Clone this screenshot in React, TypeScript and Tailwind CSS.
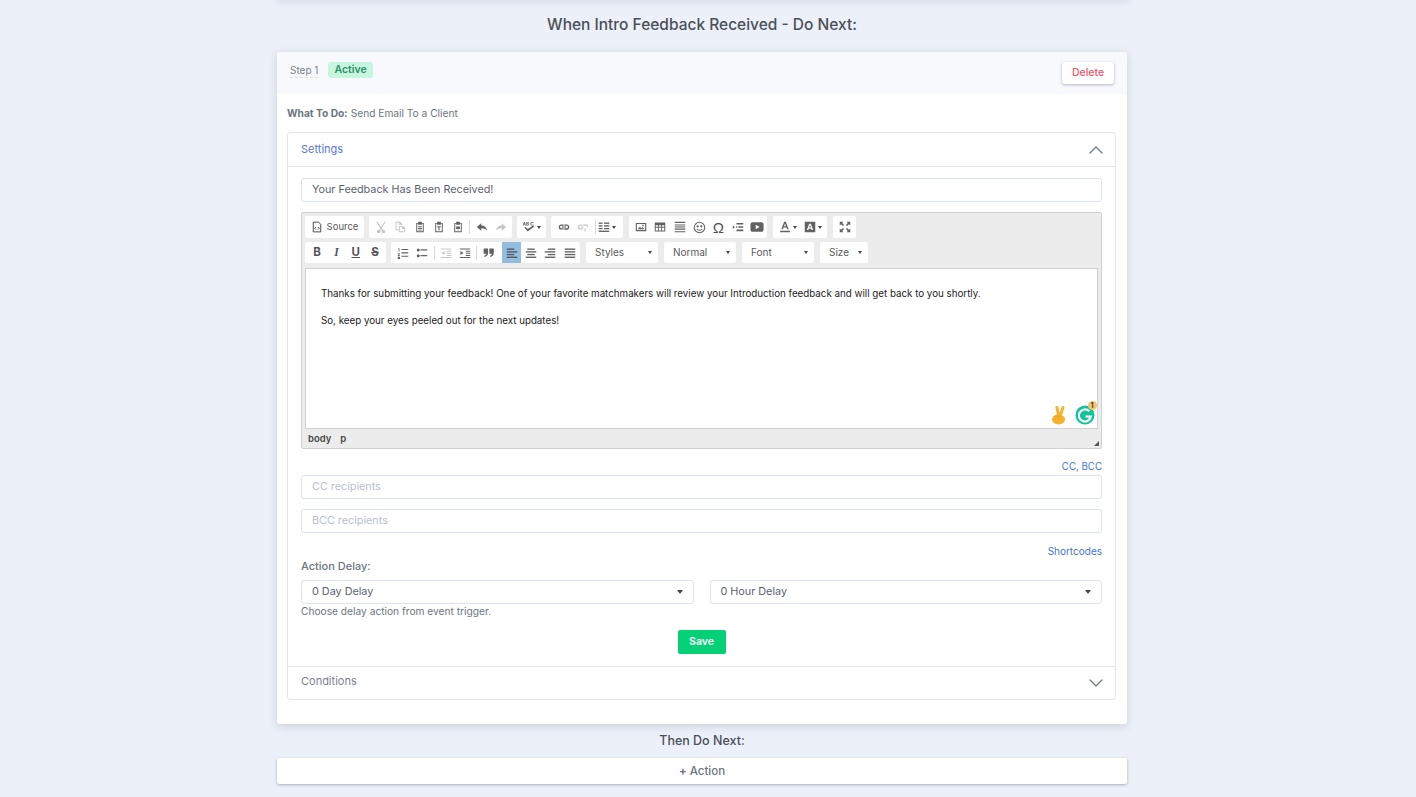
import type { ReactNode } from 'react';
import { ChevronDown, ChevronUp } from 'lucide-react';

const FONT = "font-['Inter','Noto_Sans',sans-serif]";

function Icon({ children, off = false }: { children: ReactNode; off?: boolean }) {
  return (
    <svg
      viewBox="0 0 16 16"
      className={off ? 'h-[12px] w-[12px] opacity-30' : 'h-[12px] w-[12px] opacity-85'}
      fill="#474747"
      stroke="none"
    >
      {children}
    </svg>
  );
}

function Tool({ children, active = false }: { children: ReactNode; active?: boolean }) {
  return (
    <div
      className={
        active
          ? 'flex h-full w-[19.3px] items-center justify-center bg-[#92bce0]'
          : 'flex h-full w-[19.3px] items-center justify-center'
      }
    >
      {children}
    </div>
  );
}

function Sep() {
  return <div className="mx-[1.5px] h-[14px] w-px shrink-0 bg-[#d8d8d8]" />;
}

function Group({ children, className = '' }: { children: ReactNode; className?: string }) {
  return <div className={`flex h-full items-center rounded-[2px] bg-white ${className}`}>{children}</div>;
}

function Arrow() {
  return <span className="ml-[2px] h-0 w-0 border-x-[2.5px] border-t-[3px] border-x-transparent border-t-[#474747]" />;
}

function Combo({ label, w }: { label: string; w: string }) {
  return (
    <div className={`ml-[1px] flex h-full items-center justify-between rounded-[2px] bg-white pl-[9px] pr-[6px] ${w}`}>
      <span className="text-[10px] text-[#5a5a5a]">{label}</span>
      <span className="h-0 w-0 border-x-[2.5px] border-t-[3px] border-x-transparent border-t-[#474747]" />
    </div>
  );
}

function Lines({ rows }: { rows: [number, number][] }) {
  return (
    <>
      {rows.map(([x, w], i) => (
        <rect key={i} x={x} y={2 + i * 3.6} width={w} height="1.8" />
      ))}
    </>
  );
}

function Toolbar() {
  return (
    <div className="flex flex-col gap-[4px] px-[3px] pt-[3px]">
      <div className="flex h-[22px] gap-[5px]">
        <Group className="w-[59px] justify-center gap-[4px]">
          <svg viewBox="0 0 16 16" className="h-[12px] w-[12px]" fill="none" stroke="#474747" strokeWidth="1.3">
            <path d="M3 1.5h7l3 3v10H3z" />
            <path d="M6.5 8 5 9.7l1.5 1.7M9.5 8 11 9.7l-1.5 1.7" />
          </svg>
          <span className="text-[9.5px] text-[#5a5a5a]">Source</span>
        </Group>
        <Group className="w-[143px] pl-[2.5px]">
          <Tool>
            <Icon off>
              <path d="M3 1l5 7 5-7h1.5L9 9.5l1.5 2.2a2.3 2.3 0 1 1-1.3 1L8 11l-1.2 1.7a2.3 2.3 0 1 1-1.3-1L7 9.5 1.5 1z" />
            </Icon>
          </Tool>
          <Tool>
            <Icon off>
              <path d="M2 1h6l3 3v2h-1.2V5H7V2.200H3.200V11H6v1.200H2zM6.500 6.500h5.500l3 3V15H6.500zM7.700 7.700v6.100h6.100V10.500h-3V7.700z" />
            </Icon>
          </Tool>
          <Tool>
            <Icon>
              <path d="M5.500 1h5v1.500H13V15H3V2.500h2.500zM4.300 3.800v10h7.400v-10h-1.200V5h-5V3.800zM5.500 7h5v1.200h-5zM5.500 9.300h5v1.200h-5zM5.500 11.600h5v1.200h-5z" />
            </Icon>
          </Tool>
          <Tool>
            <Icon>
              <path d="M5.500 1h5v1.500H13V15H3V2.500h2.500zM4.300 3.800v10h7.400v-10h-1.200V5h-5V3.800zM5.500 7h5v1.400H8.700V12.500H7.300V8.400H5.500z" />
            </Icon>
          </Tool>
          <Tool>
            <Icon>
              <path d="M5.500 1h5v1.500H13V15H3V2.500h2.500zM4.300 3.800v10h7.400v-10h-1.200V5h-5V3.800zM5.500 7.200h5v3.500h-5zM7 11.500h2l-1 1.500z" />
            </Icon>
          </Tool>
          <Sep />
          <Tool>
            <Icon>
              <path d="M7 3v3c4 0 7 2 8 7-1.800-2.500-4.200-3.400-8-3.400V13L1 8z" />
            </Icon>
          </Tool>
          <Tool>
            <Icon off>
              <path d="M9 3v3c-4 0-7 2-8 7 1.800-2.500 4.200-3.400 8-3.400V13l6-5z" />
            </Icon>
          </Tool>
        </Group>
        <Group className="w-[29px] justify-center">
          <Icon>
            <path d="M1 1.200h1.500L4 6H3l-.3-1H1.300L1 6H0zM1.600 4.200h.8L2 2.700zM4.500 1.200H7l.6.700v1l-.5.500.6.500v1.300l-.7.800H4.500zM5.500 2.100v.9h1V2.100zM5.500 3.900V5h1.200V3.900zM11 1.200h3v1h-3v2.800h3v1h-3l-1-1V2.200z" />
            <path d="M2 9l1.300-1.300 3 3L13.500 6 15 7.400 6.300 14z" />
          </Icon>
          <Arrow />
        </Group>
        <Group className="w-[72px] pl-[3.500px]">
          <Tool>
            <Icon>
              <path d="M1 8a3.500 3.500 0 0 1 3.500-3.500h3v1.700h-3a1.800 1.800 0 0 0 0 3.600h3v1.700h-3A3.500 3.500 0 0 1 1 8zm14 0a3.500 3.500 0 0 1-3.500 3.500h-3V9.800h3a1.800 1.800 0 0 0 0-3.600h-3V4.500h3A3.500 3.500 0 0 1 15 8zM5 7.200h6v1.600H5z" />
            </Icon>
          </Tool>
          <Tool>
            <Icon off>
              <path d="M1 8a3.500 3.500 0 0 1 3.500-3.500h3v1.700h-3a1.800 1.800 0 0 0 0 3.600h3v1.700h-3A3.500 3.500 0 0 1 1 8zm14-.5V8h-1.700a1.800 1.800 0 0 0-1.800-1.800h-3V4.500h3A3.500 3.500 0 0 1 15 7.500zM10 10h1.500v4H10zM5 7.200h4v1.600H5z" />
            </Icon>
          </Tool>
          <Sep />
          <Tool>
            <div className="flex items-center">
              <svg viewBox="0 0 16 16" className="h-[12px] w-[12px] opacity-85" fill="#474747">
                <Lines rows={[[1, 5], [1, 5], [1, 5], [1, 14]]} />
                <rect x="8" y="2" width="7" height="1.800" />
                <rect x="8" y="5.600" width="7" height="1.800" />
                <rect x="8" y="9.200" width="7" height="1.800" />
              </svg>
              <Arrow />
            </div>
          </Tool>
        </Group>
        <Group className="ml-[1px] w-[138px] pl-[2.500px]">
          <Tool>
            <Icon>
              <path d="M1 2.500h14v11H1zM2.500 4v8h11V4zM3.500 11l3-3.500 2 2 1.500-1.500 2.500 3zM9.500 5h2v2h-2z" />
            </Icon>
          </Tool>
          <Tool>
            <Icon>
              <path d="M1 2h14v12H1zM2.300 5.500v2.200h3V5.500zm4.200 0v2.200h3V5.500zm4.200 0v2.200h3V5.500zM2.300 8.900v3.800h3V8.900zm4.200 0v3.800h3V8.900zm4.200 0v3.800h3V8.900z" />
            </Icon>
          </Tool>
          <Tool>
            <Icon>
              <path d="M1 1h14v1.500H1zM1 4.500h14V6H1zM1 7.300h14v1.400H1zM1 10h14v1.500H1zM1 13.500h14V15H1z" />
            </Icon>
          </Tool>
          <Tool>
            <svg viewBox="0 0 16 16" className="h-[13px] w-[13px] opacity-85" fill="none" stroke="#474747" strokeWidth="1.300">
              <circle cx="8" cy="8" r="6.500" />
              <circle cx="5.700" cy="6.500" r=".7" fill="#474747" />
              <circle cx="10.300" cy="6.500" r=".7" fill="#474747" />
              <path d="M4.800 9.800c1.500 2 4.900 2 6.400 0" />
            </svg>
          </Tool>
          <Tool>
            <span className="font-['Liberation_Sans',sans-serif] text-[15px] leading-none text-[#505050]">Ω</span>
          </Tool>
          <Tool>
            <Icon>
              <path d="M1 6l3 2.200L1 10.300zM6 2.500h9v2.300H6zM5.500 7h1.500v2H5.500zM8.500 7H15v2H8.500zM6 11.200h9v2.300H6z" />
            </Icon>
          </Tool>
          <Tool>
            <svg viewBox="0 0 16 16" className="h-[14px] w-[14px] opacity-85" fill="#474747">
              <path d="M3 2.500h10A2.500 2.500 0 0 1 15.500 5v6a2.500 2.500 0 0 1-2.500 2.500H3A2.500 2.500 0 0 1 .5 11V5A2.500 2.500 0 0 1 3 2.500zM6.500 5.500v5L11 8z" />
            </svg>
          </Tool>
        </Group>
        <Group className="ml-[1px] w-[54px] justify-center gap-[7px]">
          <div className="flex items-center">
            <Icon>
              <path d="M6.800 1h2.400l3.600 10h-2L10 8.700H6L5.200 11h-2zM6.600 7h2.800L8 3.200zM1.500 13h13v2h-13z" />
            </Icon>
            <Arrow />
          </div>
          <div className="flex items-center">
            <Icon>
              <path d="M1 1h14v14H1zM6.900 3.500 3.800 12h1.900l.6-1.800h3.400l.6 1.800h1.900L9.100 3.500zM6.800 8.800 8 5.400l1.200 3.400z" fillRule="evenodd" />
            </Icon>
            <Arrow />
          </div>
        </Group>
        <Group className="ml-[1px] w-[23px] justify-center">
          <Icon>
            <path d="M1 1h5L4.300 2.700 6.800 5.200 5.200 6.800 2.700 4.300 1 6zM15 1v5l-1.700-1.700-2.500 2.500-1.600-1.600 2.500-2.500L10 1zM1 15v-5l1.700 1.700 2.500-2.500 1.600 1.600-2.500 2.500L6 15zM15 15h-5l1.700-1.700-2.500-2.500 1.600-1.600 2.500 2.500L15 10z" />
          </Icon>
        </Group>
      </div>
      <div className="flex h-[21px] gap-[5px]">
        <Group className="w-[81px] pl-[2.500px] text-[11.5px] text-[#555]">
          <Tool>
            <span className="font-bold">B</span>
          </Tool>
          <Tool>
            <span className="font-['Liberation_Serif',serif] font-bold italic">I</span>
          </Tool>
          <Tool>
            <span className="font-bold underline">U</span>
          </Tool>
          <Tool>
            <span className="font-bold line-through">S</span>
          </Tool>
        </Group>
        <Group className="w-[189px] pl-[2.500px]">
          <Tool>
            <Icon>
              <path d="M6 2.500h9V4H6zM6 7h9v1.500H6zM6 11.500h9V13H6zM1.500 1.500h1.700V6H2.200V2.500h-.7zM1 8.200h2.800v1L2.400 11h1.500v1H1v-1l1.500-1.800H1zM1 13h3v3H1z" />
            </Icon>
          </Tool>
          <Tool>
            <Icon>
              <path d="M6 3h9v1.800H6zM6 10.500h9v1.800H6z" />
              <circle cx="3" cy="4" r="2" />
              <circle cx="3" cy="11.500" r="2" />
            </Icon>
          </Tool>
          <Sep />
          <Tool>
            <Icon off>
              <path d="M1 2h14v1.300H1zM9 5h6v1.300H9zM9 7.800h6v1.300H9zM9 10.600h6v1.300H9zM1 13.400h14v1.300H1zM6 5.300v5.400L2 8z" />
            </Icon>
          </Tool>
          <Tool>
            <Icon>
              <path d="M1 2h14v1.300H1zM9 5h6v1.300H9zM9 7.800h6v1.300H9zM9 10.600h6v1.300H9zM1 13.400h14v1.300H1zM2 5.300v5.400L6 8z" />
            </Icon>
          </Tool>
          <Sep />
          <Tool>
            <svg viewBox="0 0 16 16" className="h-[13px] w-[13px] opacity-85" fill="#474747">
              <path d="M2 3h5.500v5.500C7.500 11 6 12.500 3.300 13.500l-.6-1.400C4.200 11.500 5 10.700 5 9.500H2zM9 3h5.500v5.500c0 2.500-1.500 4-4.200 5l-.6-1.400c1.500-.6 2.300-1.400 2.300-2.600H9z" />
            </svg>
          </Tool>
          <div className="w-[4px]" />
          <Tool active>
            <Icon>
              <Lines rows={[[1, 10], [1, 14], [1, 10], [1, 14]]} />
            </Icon>
          </Tool>
          <Tool>
            <Icon>
              <Lines rows={[[3, 10], [1, 14], [3, 10], [1, 14]]} />
            </Icon>
          </Tool>
          <Tool>
            <Icon>
              <Lines rows={[[5, 10], [1, 14], [5, 10], [1, 14]]} />
            </Icon>
          </Tool>
          <Tool>
            <Icon>
              <Lines rows={[[1, 14], [1, 14], [1, 14], [1, 14]]} />
            </Icon>
          </Tool>
        </Group>
        <Combo label="Styles" w="w-[72px]" />
        <Combo label="Normal" w="w-[72px]" />
        <Combo label="Font" w="w-[72px]" />
        <Combo label="Size" w="w-[48px]" />
      </div>
    </div>
  );
}

function Editor() {
  return (
    <div className="h-[237px] rounded-[2px] border border-[#d1d1d1] bg-[#ececec]">
      <Toolbar />
      <div className="relative mx-[3px] mt-[5px] h-[161px] border border-[#d1d1d1] bg-white px-[15px] pt-[18px] text-[9.77px] leading-[14px] text-[#222]">
        <p>Thanks for submitting your feedback! One of your favorite matchmakers will review your Introduction feedback and will get back to you shortly.</p>
        <p className="mt-[13px]">So, keep your eyes peeled out for the next updates!</p>
        <div className="absolute bottom-[3px] right-[2px] flex items-center gap-[9px]">
          <svg viewBox="0 0 16 20" className="h-[20px] w-[16px]">
            <path d="M7 2.500 8.500 10M13 2.500 10.500 10" fill="none" stroke="#f5b22d" strokeWidth="3" strokeLinecap="round" />
            <ellipse cx="8.500" cy="14.500" rx="6.500" ry="5" fill="#f5b22d" />
            <path d="M4 11.500c2-.8 4-.6 5.500.5" fill="none" stroke="#e09a1c" strokeWidth=".8" />
          </svg>
          <div className="relative h-[20px] w-[20px]">
            <svg viewBox="0 0 20 20" className="h-[20px] w-[20px]">
              <circle cx="10" cy="10" r="9.500" fill="#15c39a" />
              <path d="M14.200 6.300A6 6 0 1 0 15.800 11.500H10.500" fill="none" stroke="#fff" strokeWidth="2.200" />
            </svg>
            <span className="absolute -right-[1.500px] -top-[4px] flex h-[9px] w-[9px] items-center justify-center rounded-full bg-[#f5c46b] text-[7px] font-bold leading-none text-[#444]">
              1
            </span>
          </div>
        </div>
      </div>
      <div className="relative flex h-[19px] items-center gap-[9px] pl-[6px] pt-[1px] text-[9.5px] font-semibold text-[#484848]">
        <span>body</span>
        <span>p</span>
        <span className="absolute bottom-[2px] right-[2px] h-0 w-0 border-b-[5px] border-l-[5px] border-b-[#555] border-l-transparent" />
      </div>
    </div>
  );
}

function Field({ children, muted = false }: { children: ReactNode; muted?: boolean }) {
  return (
    <div
      className={`flex h-[24px] items-center rounded-[3px] border border-[#dbe3f2] bg-white px-[10px] text-[10.8px] ${
        muted ? 'text-[#b8bfcc]' : 'text-[#5c6370]'
      }`}
    >
      {children}
    </div>
  );
}

function Select({ label }: { label: string }) {
  return (
    <div className="flex h-[24px] flex-1 items-center justify-between rounded-[3px] border border-[#dbe3f2] bg-white px-[10px] text-[10.8px] text-[#5c6370]">
      <span>{label}</span>
      <span className="h-0 w-0 border-x-[3.5px] border-t-[4px] border-x-transparent border-t-[#444]" />
    </div>
  );
}

export default function App() {
  return (
    <div className={`h-[797px] overflow-hidden bg-[#ecf0f8] pr-[12px] ${FONT}`}>
      <div className="mx-auto w-[850px]">
        <div className="h-0 shadow-[0_0_6px_2px_rgba(100,110,140,0.2)]" />
        <h2 className="flex h-[52px] items-center justify-center pb-[3px] text-[15.5px] font-medium text-[#495057]">
          When Intro Feedback Received - Do Next:
        </h2>

        <section className="h-[672px] overflow-hidden rounded-[3px] bg-white shadow-[0_2px_8px_rgba(80,90,120,0.22)]">
          <div className="flex h-[42px] justify-between bg-[#f8f9fd] pl-[13px] pr-[13px]">
            <div className="flex h-[36px] items-center gap-[10px]">
              <span className="border-b border-dashed border-[#ddd] text-[10px] leading-[14px] text-[#7b828c]">Step 1</span>
              <span className="flex h-[16px] items-center rounded-[3px] bg-[#c8f5e0] px-[6px] text-[10.5px] font-semibold text-[#2a9163]">
                Active
              </span>
            </div>
            <button className="mt-[10px] h-[22px] w-[52px] rounded-[3px] bg-white text-[10.5px] font-medium text-[#f1556c] shadow-[0_1px_3px_rgba(40,50,80,0.35)]">
              Delete
            </button>
          </div>

          <div className="pl-[10px] pr-[11px]">
            <p className="flex h-[38px] items-center pt-[2px] text-[10.2px] text-[#6c757d]">
              <strong className="mr-[3px] font-bold">What To Do:</strong> Send Email To a Client
            </p>

            <div className="rounded-[3px] border border-[#e2e5ea]">
              <div className="flex h-[34px] items-center justify-between border-b border-[#e2e5ea] px-[13px] text-[11px] text-[#5a77d8]">
                <span>Settings</span>
                <div className="-mr-[6px]">
                  <ChevronUp size={24} strokeWidth={1.2} color="#6c7a8c" />
                </div>
              </div>
              <div className="px-[13px] pt-[11px]">
                <Field>Your Feedback Has Been Received!</Field>
                <div className="mt-[10px]">
                  <Editor />
                </div>
                <div className="mt-[11px] flex justify-end text-[9.7px] leading-[14px] text-[#3f74d8]">CC, BCC</div>
                <div className="mt-[1px]">
                  <Field muted>CC recipients</Field>
                </div>
                <div className="mt-[10px]">
                  <Field muted>BCC recipients</Field>
                </div>
                <div className="mt-[11px] flex justify-end text-[10px] leading-[14px] text-[#3f74d8]">Shortcodes</div>
                <p className="mt-[1px] text-[11px] font-medium leading-[15px] text-[#6c757d]">Action Delay:</p>
                <div className="mt-[6px] flex gap-[16px]">
                  <Select label="0 Day Delay" />
                  <Select label="0 Hour Delay" />
                </div>
                <p className="text-[10.2px] leading-[14px] text-[#6c757d]">Choose delay action from event trigger.</p>
                <div className="mt-[12px] flex justify-center">
                  <button className="h-[24px] w-[48px] rounded-[2px] bg-[#04d078] text-[10.5px] font-semibold text-white">Save</button>
                </div>
                <div className="h-[12px]" />
              </div>
              <div className="flex h-[33px] items-center justify-between border-t border-[#e2e5ea] px-[13px] pb-[3px] text-[11px] text-[#7b828c]">
                <span>Conditions</span>
                <div className="-mr-[6px] mt-[3px]">
                  <ChevronDown size={24} strokeWidth={1.2} color="#6c7a8c" />
                </div>
              </div>
            </div>
          </div>
        </section>

        <h3 className="flex h-[34px] items-center justify-center text-[12.5px] font-medium text-[#495057]">Then Do Next:</h3>
        <div className="flex h-[26px] items-center justify-center gap-[3px] rounded-[2px] bg-white pt-[1px] text-[11.5px] font-medium text-[#6c757d] shadow-[0_1px_3px_rgba(40,50,80,0.35)]">
          <span className="font-bold">+</span> Action
        </div>
      </div>
    </div>
  );
}
